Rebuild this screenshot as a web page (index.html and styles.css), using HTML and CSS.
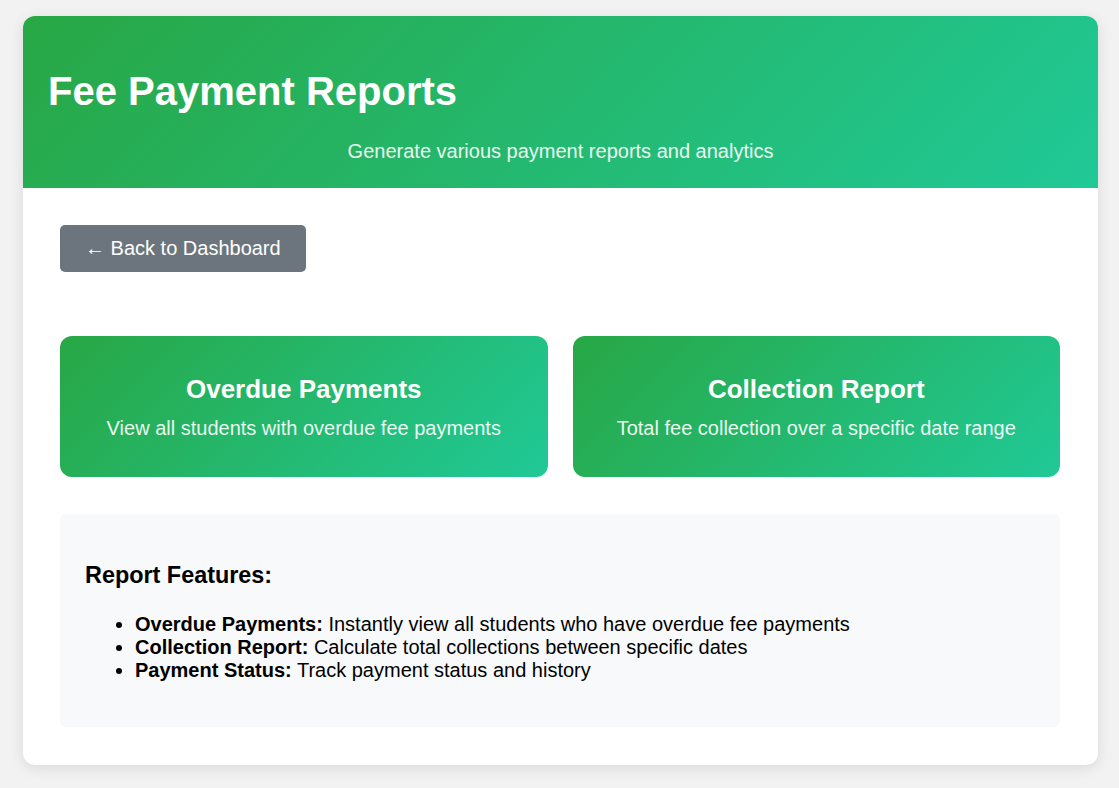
FILE: index.html
```html
<!DOCTYPE html>
<html lang="en">
<head>
<meta charset="utf-8">
<title>Fee Payment Reports</title>
<link rel="stylesheet" href="styles.css">
</head>
<body>
<div class="container">
  <header class="header">
    <h1 class="title">Fee Payment Reports</h1>
    <p class="subtitle">Generate various payment reports and analytics</p>
  </header>
  <main class="content">
    <div class="actions">
      <a class="btn-back" href="#">← Back to Dashboard</a>
    </div>
    <div class="cards">
      <a class="card" href="#">
        <h3 class="card-title">Overdue Payments</h3>
        <p class="card-text">View all students with overdue fee payments</p>
      </a>
      <a class="card" href="#">
        <h3 class="card-title">Collection Report</h3>
        <p class="card-text">Total fee collection over a specific date range</p>
      </a>
    </div>
    <section class="features">
      <h3 class="features-title">Report Features:</h3>
      <ul class="features-list">
        <li><strong>Overdue Payments:</strong> Instantly view all students who have overdue fee payments</li>
        <li><strong>Collection Report:</strong> Calculate total collections between specific dates</li>
        <li><strong>Payment Status:</strong> Track payment status and history</li>
      </ul>
    </section>
  </main>
</div>
</body>
</html>
```
FILE: styles.css
```css
* { box-sizing: border-box; }
html, body { margin: 0; padding: 0; }
body {
  background: #f2f2f2;
  font-family: "Liberation Sans", Arial, sans-serif;
  font-size: 20px;
  color: #000;
  padding: 16px 21px 23px 23px;
}
.container {
  width: 1075px;
  background: #fff;
  border-radius: 12px;
  box-shadow: 0 3px 14px rgba(0, 0, 0, 0.1);
  overflow: hidden;
}
.header {
  background: linear-gradient(135deg, #28a745 0%, #20c997 100%);
  color: #fff;
  padding: 25px;
  height: 172px;
}
.title {
  font-size: 40px;
  font-weight: bold;
  line-height: 46px;
  margin: 26.5px 0;
}
.subtitle {
  margin: 0;
  font-size: 20px;
  line-height: 23px;
  text-align: center;
  opacity: 0.9;
}
.content {
  padding: 37px 38px 38px 37px;
}
.actions {
  display: flex;
  margin-bottom: 64px;
}
.btn-back {
  display: block;
  background: #6c757d;
  color: #fff;
  text-decoration: none;
  font-size: 20px;
  line-height: 23px;
  padding: 12px 25px;
  border-radius: 5px;
}
.cards {
  display: grid;
  grid-template-columns: 1fr 1fr;
  gap: 25px;
  margin-bottom: 37px;
}
.card {
  display: block;
  background: linear-gradient(135deg, #28a745 0%, #20c997 100%);
  color: #fff;
  text-decoration: none;
  text-align: center;
  border-radius: 12px;
  padding: 38px 20px 37px;
}
.card-title {
  margin: 0 0 13px;
  font-size: 26px;
  line-height: 30px;
  font-weight: bold;
}
.card-text {
  margin: 0;
  font-size: 20px;
  line-height: 23px;
  opacity: 0.9;
}
.features {
  background: #f8f9fa;
  border-radius: 6px;
  padding: 25px;
}
.features-title {
  font-size: 23.4px;
  line-height: 27px;
  margin: 23.4px 0;
  font-weight: bold;
}
.features-list {
  margin: 20px 0;
  padding-left: 50px;
  line-height: 23px;
}
```
